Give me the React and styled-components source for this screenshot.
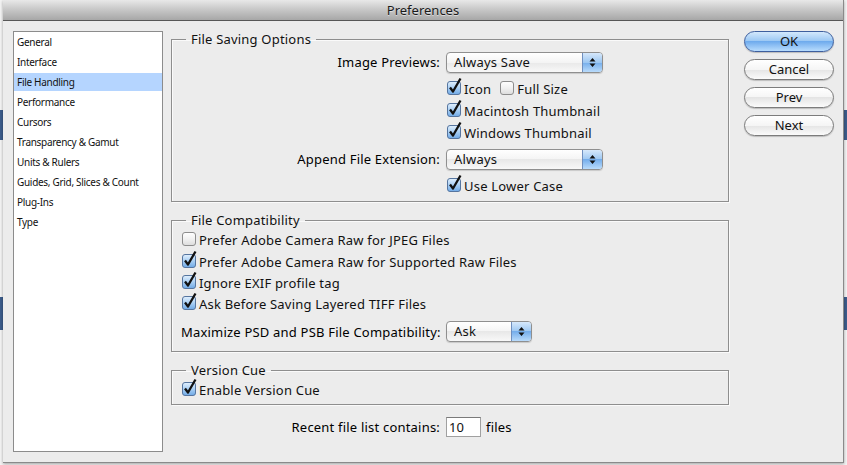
import * as React from "react"
import styled, { createGlobalStyle } from "styled-components"

const GlobalStyle = createGlobalStyle`
  html, body {
    margin: 0;
    padding: 0;
  }
  body {
    width: 847px;
    height: 465px;
    overflow: hidden;
    background:
      linear-gradient(to bottom,
        transparent 110px, #3c5d8c 110px, #3c5d8c 140px, transparent 140px,
        transparent 297px, #3c5d8c 297px, #3c5d8c 330px, transparent 330px),
      #f4f4f4;
    font-family: "Noto Sans", "DejaVu Sans", sans-serif;
    color: #000;
  }
`

const sections = [
  "General",
  "Interface",
  "File Handling",
  "Performance",
  "Cursors",
  "Transparency & Gamut",
  "Units & Rulers",
  "Guides, Grid, Slices & Count",
  "Plug-Ins",
  "Type",
]

const Check = ({ on }) => (
  <CheckBox width="17" height="18" viewBox="0 0 17 18">
    <defs>
      <linearGradient id="boxOff" x1="0" y1="0" x2="0" y2="1">
        <stop offset="0" stopColor="#ffffff" />
        <stop offset="0.5" stopColor="#f1f1f1" />
        <stop offset="1" stopColor="#dcdcdc" />
      </linearGradient>
      <linearGradient id="boxOn" x1="0" y1="0" x2="0" y2="1">
        <stop offset="0" stopColor="#e2f0fd" />
        <stop offset="0.5" stopColor="#a9cff4" />
        <stop offset="1" stopColor="#6fa9e6" />
      </linearGradient>
    </defs>
    <rect
      x="1.5"
      y="3.5"
      width="13"
      height="13"
      rx="2.5"
      fill={on ? "url(#boxOn)" : "url(#boxOff)"}
      stroke={on ? "#56759f" : "#8d8d8d"}
    />
    {on && (
      <path
        d="M4 9.5 L7 13.5 L14.5 0.5"
        fill="none"
        stroke="#111"
        strokeWidth="2.3"
        strokeLinejoin="round"
      />
    )}
  </CheckBox>
)

const Toggle = ({ on, children }) => (
  <ToggleLabel>
    <Check on={on} />
    {children}
  </ToggleLabel>
)

const Popup = ({ width, children }) => (
  <Select $w={width}>
    <SelectText>{children}</SelectText>
    <SelectArrows>
      <svg width="7" height="11" viewBox="0 0 7 11">
        <path d="M3.5 1 L6.5 4.5 L0.5 4.5 Z M3.5 10 L6.5 6.5 L0.5 6.5 Z" fill="#111" />
      </svg>
    </SelectArrows>
  </Select>
)

const App = () => (
  <>
    <GlobalStyle />
    <Window>
      <TitleBar>Preferences</TitleBar>
      <Body>
        <Sidebar>
          {sections.map(s => (
            <SideItem key={s} $active={s === "File Handling"}>
              {s}
            </SideItem>
          ))}
        </Sidebar>

        <Main>
          <Group $pt={5} $pb={4}>
            <Legend>File Saving Options</Legend>
            <FormRow $h={20}>
              <Label>Image Previews:</Label>
              <Popup width={155}>Always Save</Popup>
            </FormRow>
            <FormRow $h={22} $mt={6}>
              <Label />
              <Toggle on>Icon</Toggle>
              <Spacer $w={8} />
              <Toggle>Full Size</Toggle>
            </FormRow>
            <FormRow $h={22}>
              <Label />
              <Toggle on>Macintosh Thumbnail</Toggle>
            </FormRow>
            <FormRow $h={22}>
              <Label />
              <Toggle on>Windows Thumbnail</Toggle>
            </FormRow>
            <FormRow $h={20} $mt={5}>
              <Label>Append File Extension:</Label>
              <Popup width={155}>Always</Popup>
            </FormRow>
            <FormRow $h={22} $mt={6}>
              <Label />
              <Toggle on>Use Lower Case</Toggle>
            </FormRow>
          </Group>

          <Group $mt={10} $pt={1}>
            <Legend>File Compatibility</Legend>
            <FormRow $h={22}>
              <Toggle>Prefer Adobe Camera Raw for JPEG Files</Toggle>
            </FormRow>
            <FormRow $h={22}>
              <Toggle on>Prefer Adobe Camera Raw for Supported Raw Files</Toggle>
            </FormRow>
            <FormRow $h={20}>
              <Toggle on>Ignore EXIF profile tag</Toggle>
            </FormRow>
            <FormRow $h={22}>
              <Toggle on>Ask Before Saving Layered TIFF Files</Toggle>
            </FormRow>
            <FormRow $h={21} $mt={6} $mb={9}>
              <Label>Maximize PSD and PSB File Compatibility:</Label>
              <Popup width={84}>Ask</Popup>
            </FormRow>
          </Group>

          <Group $mt={10} $pt={1}>
            <Legend>Version Cue</Legend>
            <FormRow $h={22} $mb={3}>
              <Toggle on>Enable Version Cue</Toggle>
            </FormRow>
          </Group>

          <FormRow $h={20} $mt={12}>
            <Label $w={269}>Recent file list contains:</Label>
            <NumberField defaultValue="10" />
            <Unit>files</Unit>
          </FormRow>
        </Main>

        <Buttons>
          <PushButton $primary>OK</PushButton>
          <PushButton>Cancel</PushButton>
          <PushButton>Prev</PushButton>
          <PushButton>Next</PushButton>
        </Buttons>
      </Body>
    </Window>
  </>
)

const Window = styled.div`
  margin-left: 3px;
  width: 840px;
  height: 462px;
  background: #ececec;
  border-right: 1px solid #8a8a8a;
  border-bottom: 1px solid #8a8a8a;
  box-shadow: 0 1px 3px rgba(0, 0, 0, 0.35);
  display: flex;
  flex-direction: column;
`

const TitleBar = styled.div`
  height: 20px;
  flex: none;
  border-bottom: 1px solid #575757;
  background: linear-gradient(#e8e8e8, #c9c9c9 45%, #a7a7a7);
  text-align: center;
  font-size: 13px;
  line-height: 21px;
  color: #1a1a1a;
  text-shadow: 0 1px 0 rgba(255, 255, 255, 0.5);
`

const Body = styled.div`
  flex: 1;
  display: flex;
  padding: 10px 8px 0 10px;
`

const Sidebar = styled.ul`
  list-style: none;
  margin: 0;
  padding: 0;
  width: 148px;
  height: 419px;
  background: #fff;
  border: 1px solid #8c8c8c;
  flex: none;
`

const SideItem = styled.li`
  height: 20px;
  display: flex;
  align-items: center;
  padding-left: 3px;
  font-size: 10px;
  letter-spacing: -0.3px;
  color: #111;
  background: ${p => (p.$active ? "#b5d5ff" : "transparent")};
  box-shadow: ${p => (p.$active ? "inset 0 1px 0 #fff, inset 0 -1px 0 #fff" : "none")};
`

const Main = styled.div`
  width: 558px;
  margin-left: 8px;
  flex: none;
  font-size: 13px;
  letter-spacing: 0.2px;
`

const Group = styled.fieldset`
  margin: ${p => p.$mt || 0}px 0 0;
  padding: ${p => p.$pt || 0}px 9px ${p => p.$pb || 0}px 9px;
  border: 1px solid #8e8e8e;
  box-shadow: 1px 1px 0 #fafafa inset, 1px 1px 0 #fafafa;
  min-width: 0;
`

const Legend = styled.legend`
  margin-left: 5px;
  padding: 0 5px;
  font-size: 13px;
  line-height: 16px;
  color: #111;
`

const FormRow = styled.div`
  display: flex;
  align-items: center;
  height: ${p => p.$h}px;
  margin-top: ${p => p.$mt || 0}px;
  margin-bottom: ${p => p.$mb || 0}px;
  white-space: nowrap;
`

const Label = styled.span`
  width: ${p => p.$w || 259}px;
  margin-right: 6px;
  flex: none;
  text-align: right;
`

const Spacer = styled.span`
  width: ${p => p.$w}px;
  flex: none;
`

const ToggleLabel = styled.label`
  display: flex;
  align-items: center;
  gap: 1px;
  color: #111;
`

const CheckBox = styled.svg`
  flex: none;
  margin-top: -4px;
  overflow: visible;
`

const Select = styled.div`
  width: ${p => p.$w}px;
  height: 19px;
  display: flex;
  border: 1px solid #8f8f8f;
  border-radius: 4px;
  overflow: hidden;
  box-shadow: 0 1px 1px rgba(0, 0, 0, 0.15);
  background: linear-gradient(#ffffff, #f4f4f4 50%, #e8e8e8 50%, #f8f8f8);
`

const SelectText = styled.span`
  flex: 1;
  padding-left: 7px;
  line-height: 19px;
  color: #111;
`

const SelectArrows = styled.span`
  width: 19px;
  display: flex;
  align-items: center;
  justify-content: center;
  border-left: 1px solid #6f8fbf;
  background: linear-gradient(#d6e8fb, #9cc7f2 50%, #74adeb 50%, #b9dbfb);
`

const NumberField = styled.input`
  width: 29px;
  height: 18px;
  padding: 0 2px;
  border: 1px solid #a0a0a0;
  border-top-color: #7a7a7a;
  background: #fff;
  font: inherit;
  font-size: 13px;
  color: #111;
  outline: none;
`

const Unit = styled.span`
  margin-left: 5px;
`

const Buttons = styled.div`
  margin-left: 15px;
  display: flex;
  flex-direction: column;
  gap: 7px;
`

const PushButton = styled.button`
  width: 90px;
  height: 21px;
  padding: 0;
  border-radius: 11px;
  border: 1px solid ${p => (p.$primary ? "#3e5f9e" : "#7c7c7c")};
  background: ${p =>
    p.$primary
      ? "linear-gradient(#d3e8fc, #98c6f3 50%, #6fabed 50%, #b8dcfd)"
      : "linear-gradient(#ffffff, #f5f5f5 50%, #e4e4e4 50%, #fbfbfb)"};
  box-shadow: 0 1px 1px rgba(0, 0, 0, 0.2);
  font-family: "Noto Sans", "DejaVu Sans", sans-serif;
  font-size: 13px;
  line-height: 19px;
  color: #111;
`

export default App
